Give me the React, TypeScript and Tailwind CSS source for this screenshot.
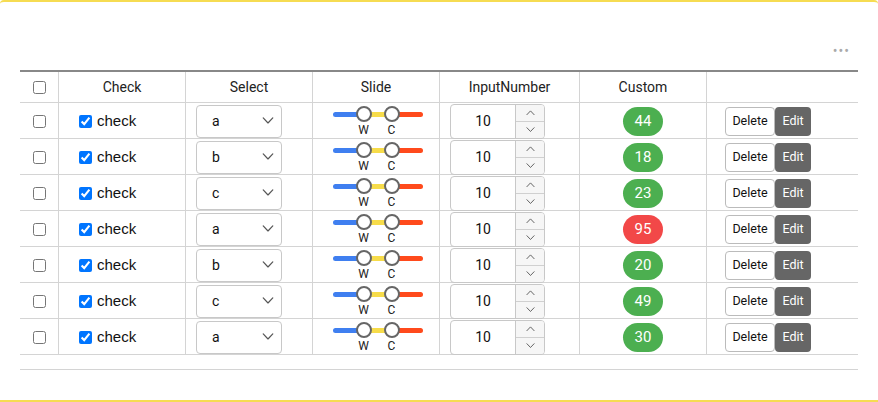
import React from "react";

const rows = [
  { sel: "a", val: 44, red: false },
  { sel: "b", val: 18, red: false },
  { sel: "c", val: 23, red: false },
  { sel: "a", val: 95, red: true },
  { sel: "b", val: 20, red: false },
  { sel: "c", val: 49, red: false },
  { sel: "a", val: 30, red: false },
];

const gridCols = "grid grid-cols-[39px_127px_127px_127px_140px_127px_151px]";

function Chevron({ up = false, size = 10 }: { up?: boolean; size?: number }) {
  return (
    <svg width={size} height={size * 0.6} viewBox="0 0 10 6" fill="none">
      <path
        d={up ? "M1 5.2 L5 1 L9 5.2" : "M1 0.8 L5 5 L9 0.8"}
        stroke="#555"
        strokeWidth="1"
        strokeLinecap="round"
        strokeLinejoin="round"
      />
    </svg>
  );
}

function Slider() {
  return (
    <div className="relative w-[90px] h-[36px]">
      <div className="absolute left-0 top-[9px] h-[5px] w-[90px] flex rounded-full overflow-hidden">
        <div className="w-[31px] bg-[#3f7ff0]" />
        <div className="w-[28px] bg-[#f7dc4a]" />
        <div className="flex-1 bg-[#ff4a1c]" />
      </div>
      <div className="absolute left-[23px] top-[3px] w-[16px] h-[16px] rounded-full bg-white border-2 border-[#666]" />
      <div className="absolute left-[51px] top-[3px] w-[16px] h-[16px] rounded-full bg-white border-2 border-[#666]" />
      <div className="absolute left-[25px] top-[20px] w-[12px] text-center text-[12px] leading-[14px] text-[#222]">W</div>
      <div className="absolute left-[53px] top-[20px] w-[12px] text-center text-[12px] leading-[14px] text-[#222]">C</div>
    </div>
  );
}

export default function App() {
  return (
    <div className="w-[878px] h-[402px] bg-white font-['Roboto',_'Liberation_Sans',_sans-serif] text-[#222] overflow-hidden">
      <div className="h-[402px] border-t-2 border-b-2 border-[#f6dc52] rounded-t-[4px] flex flex-col">
        <div className="h-[68px] flex justify-end items-end pr-[28px] pb-[14px]">
          <span className="text-[#aaa] text-[14px] leading-[10px] tracking-[1px]">•••</span>
        </div>
        <div className="mx-[20px] border-t-2 border-[#888]">
          <div className={`${gridCols} h-[31px] border-b border-[#d4d4d4] text-[14px] text-[#222]`}>
            <div className="border-r border-[#d4d4d4] flex items-center justify-center">
              <input type="checkbox" className="w-[13px] h-[13px] m-0" readOnly />
            </div>
            <div className="border-r border-[#d4d4d4] flex items-center justify-center">Check</div>
            <div className="border-r border-[#d4d4d4] flex items-center justify-center">Select</div>
            <div className="border-r border-[#d4d4d4] flex items-center justify-center">Slide</div>
            <div className="border-r border-[#d4d4d4] flex items-center justify-center">InputNumber</div>
            <div className="border-r border-[#d4d4d4] flex items-center justify-center">Custom</div>
            <div />
          </div>
          {rows.map((r, i) => (
            <div key={i} className={`${gridCols} h-[36px] border-b border-[#d4d4d4]`}>
              <div className="border-r border-[#d4d4d4] flex items-center justify-center">
                <input type="checkbox" className="w-[13px] h-[13px] m-0" readOnly />
              </div>
              <div className="border-r border-[#d4d4d4] flex items-center pl-[20px] gap-[5px]">
                <input type="checkbox" className="w-[13px] h-[13px] m-0" defaultChecked readOnly />
                <span className="text-[15px] text-[#111] font-['Liberation_Sans',_sans-serif]">check</span>
              </div>
              <div className="border-r border-[#d4d4d4] flex items-center pl-[10px]">
                <div className="w-[86px] h-[33px] border border-[#c8c8c8] rounded-[4px] flex items-center justify-between pl-[15px] pr-[7px] text-[14px] text-[#111]">
                  <span>{r.sel}</span>
                  <Chevron size={12} />
                </div>
              </div>
              <div className="border-r border-[#d4d4d4] flex items-start justify-center pl-[3px]">
                <Slider />
              </div>
              <div className="border-r border-[#d4d4d4] flex items-center pl-[10px]">
                <div className="w-[95px] h-[35px] border border-[#c8c8c8] rounded-[4px] flex overflow-hidden">
                  <div className="w-[64px] flex items-center justify-center text-[14px] text-[#111]">10</div>
                  <div className="flex-1 border-l border-[#c8c8c8] bg-[#f6f6f6] flex flex-col">
                    <div className="flex-1 flex items-center justify-center border-b border-[#d0d0d0]">
                      <Chevron up size={9} />
                    </div>
                    <div className="flex-1 flex items-center justify-center">
                      <Chevron size={9} />
                    </div>
                  </div>
                </div>
              </div>
              <div className="border-r border-[#d4d4d4] flex items-center justify-center">
                <div
                  className={`w-[40px] h-[29px] rounded-full flex items-center justify-center text-white text-[15px] ${
                    r.red ? "bg-[#f24848]" : "bg-[#4caf50]"
                  }`}
                >
                  {r.val}
                </div>
              </div>
              <div className="flex items-center pl-[18px]">
                <div className="h-[29px] w-[50px] border border-[#bbb] rounded-[4px] bg-white flex items-center justify-center text-[12.5px] text-[#111]">
                  Delete
                </div>
                <div className="h-[29px] w-[36px] rounded-[4px] bg-[#666] flex items-center justify-center text-[12.5px] text-white">
                  Edit
                </div>
              </div>
            </div>
          ))}
          <div className="h-[15px] border-b border-[#d4d4d4]" />
        </div>
      </div>
    </div>
  );
}
